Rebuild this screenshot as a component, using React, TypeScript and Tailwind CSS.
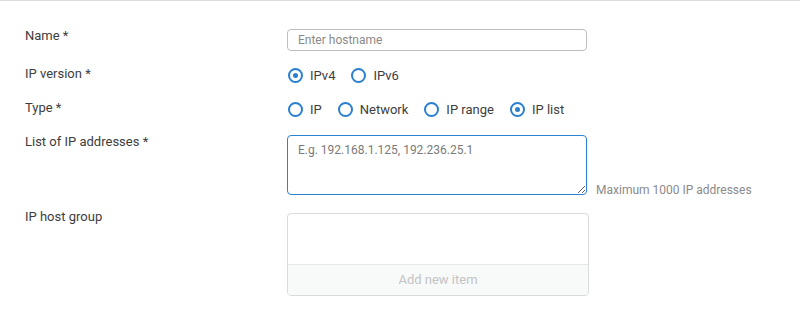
import React from 'react';

const font = { fontFamily: 'Roboto, "Noto Sans", sans-serif' };

function Radio({ label, checked }: { label: string; checked?: boolean }) {
  return (
    <label className="flex items-center gap-[7px] text-[13px] text-[#3d3d3d]">
      <span className="flex items-center justify-center w-[15px] h-[15px] rounded-full border-2 border-[#2a7fcf]">
        {checked && <span className="w-[5px] h-[5px] rounded-full bg-[#2a7fcf]" />}
      </span>
      {label}
    </label>
  );
}

function Row({ label, children, className }: { label: string; children: React.ReactNode; className?: string }) {
  return (
    <div className={`flex items-start ${className ?? ''}`}>
      <div className="w-[262px] shrink-0 text-[13px] leading-[18px] text-[#3d3d3d]">{label}</div>
      {children}
    </div>
  );
}

export default function App() {
  return (
    <div className="w-[800px] h-[321px] bg-white border-t border-[#dcdcdc] pl-[25px]" style={font}>
      <Row label="Name *" className="mt-[26px]">
        <input
          className="mt-[2px] w-[300px] h-[22px] rounded-[4px] border border-[#bdbdbd] px-[10px] text-[12px] text-[#333] placeholder:text-[#8a8a8a] outline-none"
          placeholder="Enter hostname"
        />
      </Row>
      <Row label="IP version *" className="mt-[14px]">
        <div className="flex items-center gap-[16px] mt-[1px] pl-[1px]">
          <Radio label="IPv4" checked />
          <Radio label="IPv6" />
        </div>
      </Row>
      <Row label="Type *" className="mt-[13px]">
        <div className="flex items-center gap-[16px] mt-[1px] pl-[1px]">
          <Radio label="IP" />
          <Radio label="Network" />
          <Radio label="IP range" />
          <Radio label="IP list" checked />
        </div>
      </Row>
      <Row label="List of IP addresses *" className="mt-[14px]">
        <div className="flex items-end gap-[9px] mt-[2px]">
          <textarea
            className="w-[300px] h-[60px] rounded-[4px] border border-[#2a84d2] px-[10px] py-[5px] text-[12px] text-[#333] placeholder:text-[#7a7a7a] outline-none"
            placeholder="E.g. 192.168.1.125, 192.236.25.1"
          />
          <span className="text-[12px] leading-[14px] text-[#8a8a8a] mb-[-2px]">Maximum 1000 IP addresses</span>
        </div>
      </Row>
      <Row label="IP host group" className="mt-[13px]">
        <div className="mt-[5px] w-[302px] h-[83px] rounded-[4px] border border-[#dadada] flex flex-col overflow-hidden">
          <div className="flex-1" />
          <div className="h-[31px] border-t border-[#e6e6e6] bg-[#f8f9f9] flex items-center justify-center text-[13px] text-[#c4c4c4]">
            Add new item
          </div>
        </div>
      </Row>
    </div>
  );
}
